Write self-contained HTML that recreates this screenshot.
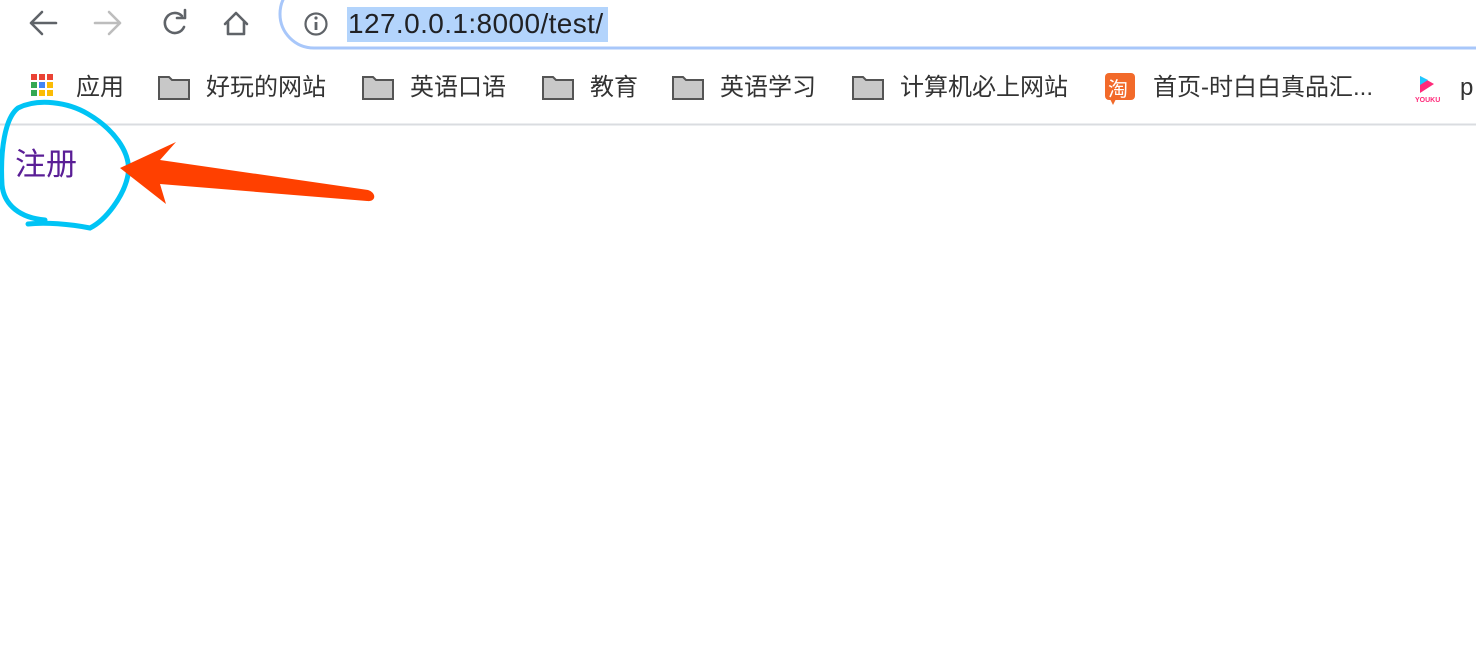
<!DOCTYPE html>
<html><head><meta charset="utf-8"><style>
body{margin:0;width:1476px;height:650px;background:#fff;position:relative;overflow:hidden;font-family:"Liberation Sans","Noto Sans CJK SC",sans-serif}
.a{position:absolute}
.bm{position:absolute;top:72px;font-size:24px;color:#333;line-height:32px;white-space:nowrap}
</style></head><body>
<svg class="a" style="left:0;top:0" width="1476" height="130">
<g stroke="#5f6368" stroke-width="2.6" fill="none" stroke-linecap="round" stroke-linejoin="round">
<path d="M56 23H31M42 12L31 23L42 34"/>
<path d="M95 23H120M109 12L120 23L109 34" stroke="#bdbdbd"/>
<path d="M182 16A10 10 0 1 0 184 27"/><path d="M185 10V18H177" />
<path d="M225 24L236 13L247 24M228 22V34H244V22"/>
<circle cx="316" cy="24" r="10.5" stroke-width="2.2"/>
</g>
<rect x="314.6" y="22" width="2.8" height="8" fill="#5f6368"/><circle cx="316" cy="18" r="1.6" fill="#5f6368"/>
<rect x="280" y="-20" width="1240" height="68" rx="34" fill="none" stroke="#a8c7fa" stroke-width="3"/>
<rect x="347" y="7" width="261" height="35" fill="#b3d4fc"/>
<line x1="0" y1="124.5" x2="1476" y2="124.5" stroke="#dadce0" stroke-width="2"/>
<g>
<rect x="31" y="74" width="6" height="6" fill="#ea4335"/><rect x="39" y="74" width="6" height="6" fill="#ea4335"/><rect x="47" y="74" width="6" height="6" fill="#ea4335"/>
<rect x="31" y="82" width="6" height="6" fill="#34a853"/><rect x="39" y="82" width="6" height="6" fill="#4285f4"/><rect x="47" y="82" width="6" height="6" fill="#fbbc05"/>
<rect x="31" y="90" width="6" height="6" fill="#34a853"/><rect x="39" y="90" width="6" height="6" fill="#fbbc05"/><rect x="47" y="90" width="6" height="6" fill="#fbbc05"/>
</g>
<g fill="#c8c8c8" stroke="#555" stroke-width="2">
<path d="M159 77h10l3 3h17v19h-30z"/><path d="M363 77h10l3 3h17v19h-30z"/><path d="M543 77h10l3 3h17v19h-30z"/><path d="M673 77h10l3 3h17v19h-30z"/><path d="M853 77h10l3 3h17v19h-30z"/>
</g>
<rect x="1105" y="73" width="30" height="27" rx="4" fill="#f26a2a"/><path d="M1110 99l3 6 3-6z" fill="#f26a2a"/>
<text x="1108" y="96" font-size="20" fill="#fff" font-family="Noto Sans CJK SC">淘</text>
<path d="M1420 76l14 8-14 9z" fill="#ff2a7a"/><path d="M1420 76l8 4-8 5z" fill="#1ec8ff"/>
<text x="1415" y="102" font-size="7" fill="#ff2a7a" font-weight="bold">YOUKU</text>
</svg>
<div class="a" style="left:348px;top:6px;font-size:28px;letter-spacing:0.4px;line-height:36px;color:#202124">127.0.0.1:8000/test/</div>
<div class="bm" style="left:76px">应用</div>
<div class="bm" style="left:206px">好玩的网站</div>
<div class="bm" style="left:410px">英语口语</div>
<div class="bm" style="left:590px">教育</div>
<div class="bm" style="left:720px">英语学习</div>
<div class="bm" style="left:900px">计算机必上网站</div>
<div class="bm" style="left:1153px">首页-时白白真品汇...</div>
<div class="bm" style="left:1460px">p</div>
<div class="a" style="left:15px;top:145px;font-size:31px;color:#5a1e96;line-height:40px">注册</div>
<svg class="a" style="left:0;top:0" width="1476" height="650">
<path d="M28 224C45 222 70 224 90 228C106 220 124 196 128 175C132 152 112 128 88 114C68 102 38 98 18 108C5 118 0 150 2 185C4 205 20 218 45 220" fill="none" stroke="#00c4f5" stroke-width="5" stroke-linecap="round"/>
<path d="M120 168L176 142L160 160L368 190C377 193 376 202 367 201L160 184L166 204Z" fill="#ff4000"/>
</svg>
</body></html>
